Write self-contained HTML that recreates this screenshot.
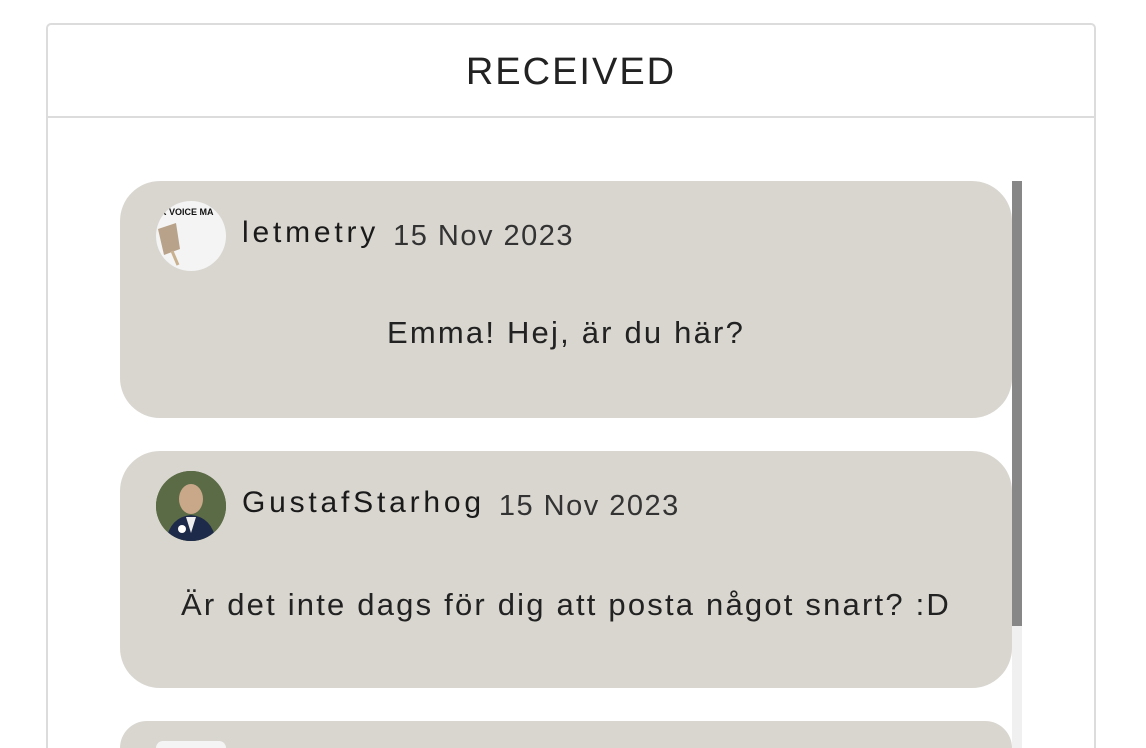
<!DOCTYPE html>
<html><head><meta charset="utf-8"><style>
*{margin:0;padding:0;box-sizing:border-box}
html,body{width:1146px;height:748px;overflow:hidden}
body{background:#fff;font-family:"Liberation Sans",sans-serif;color:#222;position:relative}
.outer{position:absolute;left:46px;top:23px;width:1050px;height:735px;border:2px solid #dcdcdc;border-radius:5px}
.head{position:absolute;left:0;top:0;width:1046px;height:93px;border-bottom:2px solid #dcdcdc;text-align:center;font-size:38px;line-height:94px;letter-spacing:2px;color:#222}
.card{position:absolute;left:120px;width:892px;height:237px;background:#d9d6d0;border-radius:40px}
.av{position:absolute;left:36px;top:20px;width:70px;height:70px;border-radius:50%;overflow:hidden}
.name{position:absolute;left:122px;top:35px;font-size:30px;color:#1a1a1a;letter-spacing:3.8px;white-space:nowrap}
.date{font-size:29px;color:#333;letter-spacing:1.5px;margin-left:14px;position:relative;top:3px}
.msg{position:absolute;left:0;right:0;top:136px;text-align:center;font-size:31px;color:#222;letter-spacing:2.2px}
.track{position:absolute;left:1012px;top:181px;width:10px;height:567px;background:#f0f0f0}
.thumb{position:absolute;left:1012px;top:181px;width:10px;height:445px;background:#878787}
</style></head><body>
<div class="outer"><div class="head">RECEIVED</div></div>
<div class="card" style="top:181px">
 <div class="av" style="background:#f4f4f4"><svg width="70" height="70"><text x="4" y="14" font-size="9" font-weight="bold" font-family="Liberation Sans" fill="#111">R VOICE MA</text><polygon points="2,28 20,22 24,48 8,54" fill="#b8a38a"/><line x1="16" y1="50" x2="22" y2="64" stroke="#c9b08e" stroke-width="3"/></svg></div>
 <div class="name">letmetry<span class="date">15 Nov 2023</span></div>
 <div class="msg" style="top:134px">Emma! Hej, är du här?</div>
</div>
<div class="card" style="top:451px">
 <div class="av" style="background:#4a5a3a"><svg width="70" height="70"><rect width="70" height="70" fill="#5b6b45"/><ellipse cx="35" cy="28" rx="12" ry="15" fill="#c9a88a"/><path d="M10 70 Q14 46 35 44 Q56 46 60 70Z" fill="#1e2a4a"/><path d="M30 46 L35 62 L40 46Z" fill="#eee"/><circle cx="26" cy="58" r="4" fill="#fff"/></svg></div>
 <div class="name">GustafStarhog<span class="date">15 Nov 2023</span></div>
 <div class="msg">Är det inte dags för dig att posta något snart? :D</div>
</div>
<div class="card" style="top:721px;height:27px;border-radius:40px 40px 0 0">
 <div class="av" style="background:#f4f4f4;height:7px;border-radius:35px 35px 0 0"></div>
</div>
<div class="track"></div><div class="thumb"></div>
</body></html>
